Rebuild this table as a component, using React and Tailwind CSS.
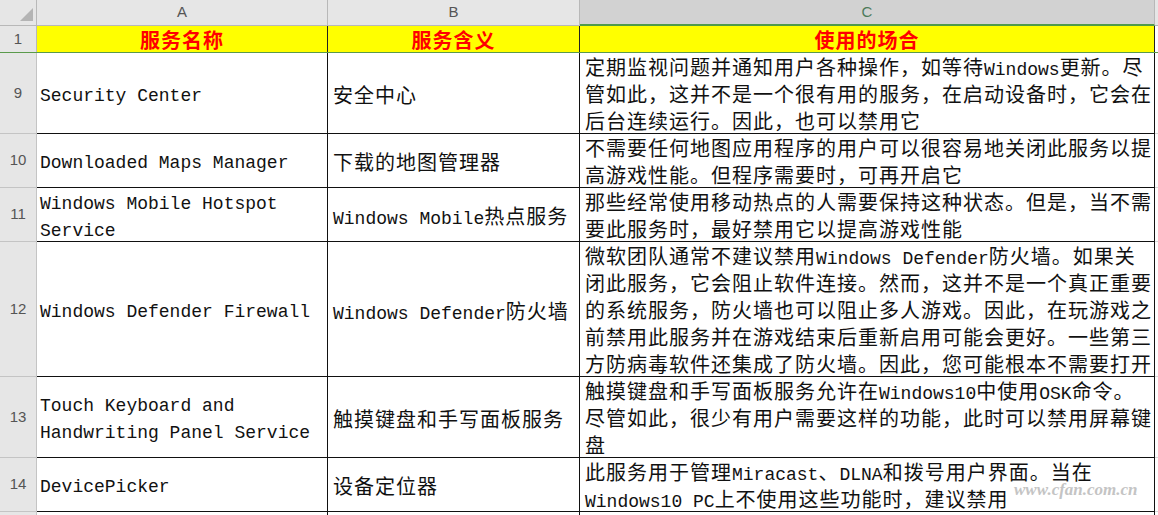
import React from "react";

const MONO = "font-['Liberation_Mono','Noto_Sans_CJK_SC',monospace] text-[18px]";
const CJK = "font-['Noto_Sans_CJK_SC',sans-serif] text-[20px] tracking-[1px]";

function Rich({ text }) {
  const parts = text.match(/[\x00-\x7f]+|[^\x00-\x7f]+/g) || [];
  return parts.map((p, i) =>
    /^[\x00-\x7f]/.test(p) ? (
      <span key={i} className={MONO}>{p}</span>
    ) : (
      <span key={i} className={CJK}>{p}</span>
    )
  );
}

function Lines({ lines }) {
  return lines.map((l, i) => (
    <div key={i} className="h-[27px] leading-[27px] whitespace-pre text-[#111]">
      <Rich text={l} />
    </div>
  ));
}

const rows = [
  {
    n: "9",
    h: "h-[81px]",
    a: ["Security Center"],
    b: ["安全中心"],
    c: [
      "定期监视问题并通知用户各种操作，如等待Windows更新。尽",
      "管如此，这并不是一个很有用的服务，在启动设备时，它会在",
      "后台连续运行。因此，也可以禁用它",
    ],
  },
  {
    n: "10",
    h: "h-[54px]",
    a: ["Downloaded Maps Manager"],
    b: ["下载的地图管理器"],
    c: [
      "不需要任何地图应用程序的用户可以很容易地关闭此服务以提",
      "高游戏性能。但程序需要时，可再开启它",
    ],
  },
  {
    n: "11",
    h: "h-[54px]",
    a: ["Windows Mobile Hotspot", "Service"],
    b: ["Windows Mobile热点服务"],
    c: [
      "那些经常使用移动热点的人需要保持这种状态。但是，当不需",
      "要此服务时，最好禁用它以提高游戏性能",
    ],
  },
  {
    n: "12",
    h: "h-[135px]",
    a: ["Windows Defender Firewall"],
    b: ["Windows Defender防火墙"],
    c: [
      "微软团队通常不建议禁用Windows Defender防火墙。如果关",
      "闭此服务，它会阻止软件连接。然而，这并不是一个真正重要",
      "的系统服务，防火墙也可以阻止多人游戏。因此，在玩游戏之",
      "前禁用此服务并在游戏结束后重新启用可能会更好。一些第三",
      "方防病毒软件还集成了防火墙。因此，您可能根本不需要打开",
    ],
  },
  {
    n: "13",
    h: "h-[81px]",
    a: ["Touch Keyboard and", "Handwriting Panel Service"],
    b: ["触摸键盘和手写面板服务"],
    c: [
      "触摸键盘和手写面板服务允许在Windows10中使用OSK命令。",
      "尽管如此，很少有用户需要这样的功能，此时可以禁用屏幕键",
      "盘",
    ],
  },
  {
    n: "14",
    h: "h-[54px]",
    a: ["DevicePicker"],
    b: ["设备定位器"],
    c: [
      "此服务用于管理Miracast、DLNA和拨号用户界面。当在",
      "Windows10 PC上不使用这些功能时，建议禁用",
    ],
  },
];

const HDR = "font-['Liberation_Sans',sans-serif] text-[15px] text-[#555]";

export default function App() {
  return (
    <div className="relative w-[1158px] h-[515px] overflow-hidden bg-white">
      {/* Column header row */}
      <div className="flex h-[26px]">
        <div className="w-[37px] shrink-0 bg-[#e6e6e6] border-r border-b border-[#b8b8b8] relative">
          <svg className="absolute left-[20px] top-[8px]" width="13" height="13" viewBox="0 0 13 13">
            <polygon points="13,0 13,13 0,13" fill="#b4b4b4" />
          </svg>
        </div>
        <div className={`w-[291px] shrink-0 bg-[#e6e6e6] border-r border-b border-[#b8b8b8] flex items-center justify-center ${HDR}`}>A</div>
        <div className={`w-[252px] shrink-0 bg-[#e6e6e6] border-r border-b border-[#b8b8b8] flex items-center justify-center ${HDR}`}>B</div>
        <div className="w-[575px] shrink-0 bg-[#d2d2d2] border-r border-[#b8b8b8] border-b-2 border-b-[#4f9a4a] flex items-center justify-center font-['Liberation_Sans',sans-serif] text-[15px] text-[#4d7a5a]">C</div>
        <div className="flex-1 bg-[#e6e6e6] border-b border-[#b8b8b8]"></div>
      </div>

      {/* Row 1 */}
      <div className="flex h-[27px] border-b border-[#5a9a4c]">
        <div className={`w-[37px] shrink-0 bg-[#e6e6e6] border-r border-[#b8b8b8] flex items-center justify-center ${HDR}`}>1</div>
        {[
          ["w-[291px]", "服务名称"],
          ["w-[252px]", "服务含义"],
          ["w-[575px]", "使用的场合"],
        ].map(([w, t]) => (
          <div key={t} className={`${w} shrink-0 bg-[#ffff00] border-r border-[#222] flex items-center justify-center pt-[2px] font-['Noto_Sans_CJK_SC',sans-serif] text-[20px] tracking-[1px] font-bold text-[#ff0000] leading-none`}>
            {t}
          </div>
        ))}
        <div className="flex-1 bg-white"></div>
      </div>

      {/* Data rows */}
      {rows.map((r) => (
        <div key={r.n} className={`flex ${r.h}`}>
          <div className={`w-[37px] shrink-0 bg-[#e6e6e6] border-r border-b border-[#c4c4c4] flex items-center justify-center ${HDR}`}>{r.n}</div>
          <div className="w-[291px] shrink-0 border-r border-b border-[#111] pl-[3px] pt-[4px] flex flex-col justify-center overflow-hidden">
            <Lines lines={r.a} />
          </div>
          <div className="w-[252px] shrink-0 border-r border-b border-[#111] pl-[5px] pt-[2px] flex flex-col justify-center overflow-hidden">
            <Lines lines={r.b} />
          </div>
          <div className="w-[575px] shrink-0 border-r border-b border-[#111] pl-[5px] flex flex-col justify-center overflow-hidden">
            <Lines lines={r.c} />
          </div>
          <div className="flex-1 border-b border-[#d9d9d9]"></div>
        </div>
      ))}

      {/* Remainder */}
      <div className="flex h-[4px]">
        <div className="w-[37px] shrink-0 bg-[#e6e6e6] border-r border-[#c4c4c4]"></div>
        <div className="w-[291px] shrink-0 border-r border-[#111]"></div>
        <div className="w-[252px] shrink-0 border-r border-[#111]"></div>
        <div className="w-[575px] shrink-0 border-r border-[#111]"></div>
      </div>

      {/* Watermark */}
      <div className="absolute left-[1014px] top-[481px] font-['Liberation_Serif',serif] italic font-bold text-[17px] leading-none text-[#c4c4c4]">
        www.cfan.com.cn
      </div>
    </div>
  );
}
